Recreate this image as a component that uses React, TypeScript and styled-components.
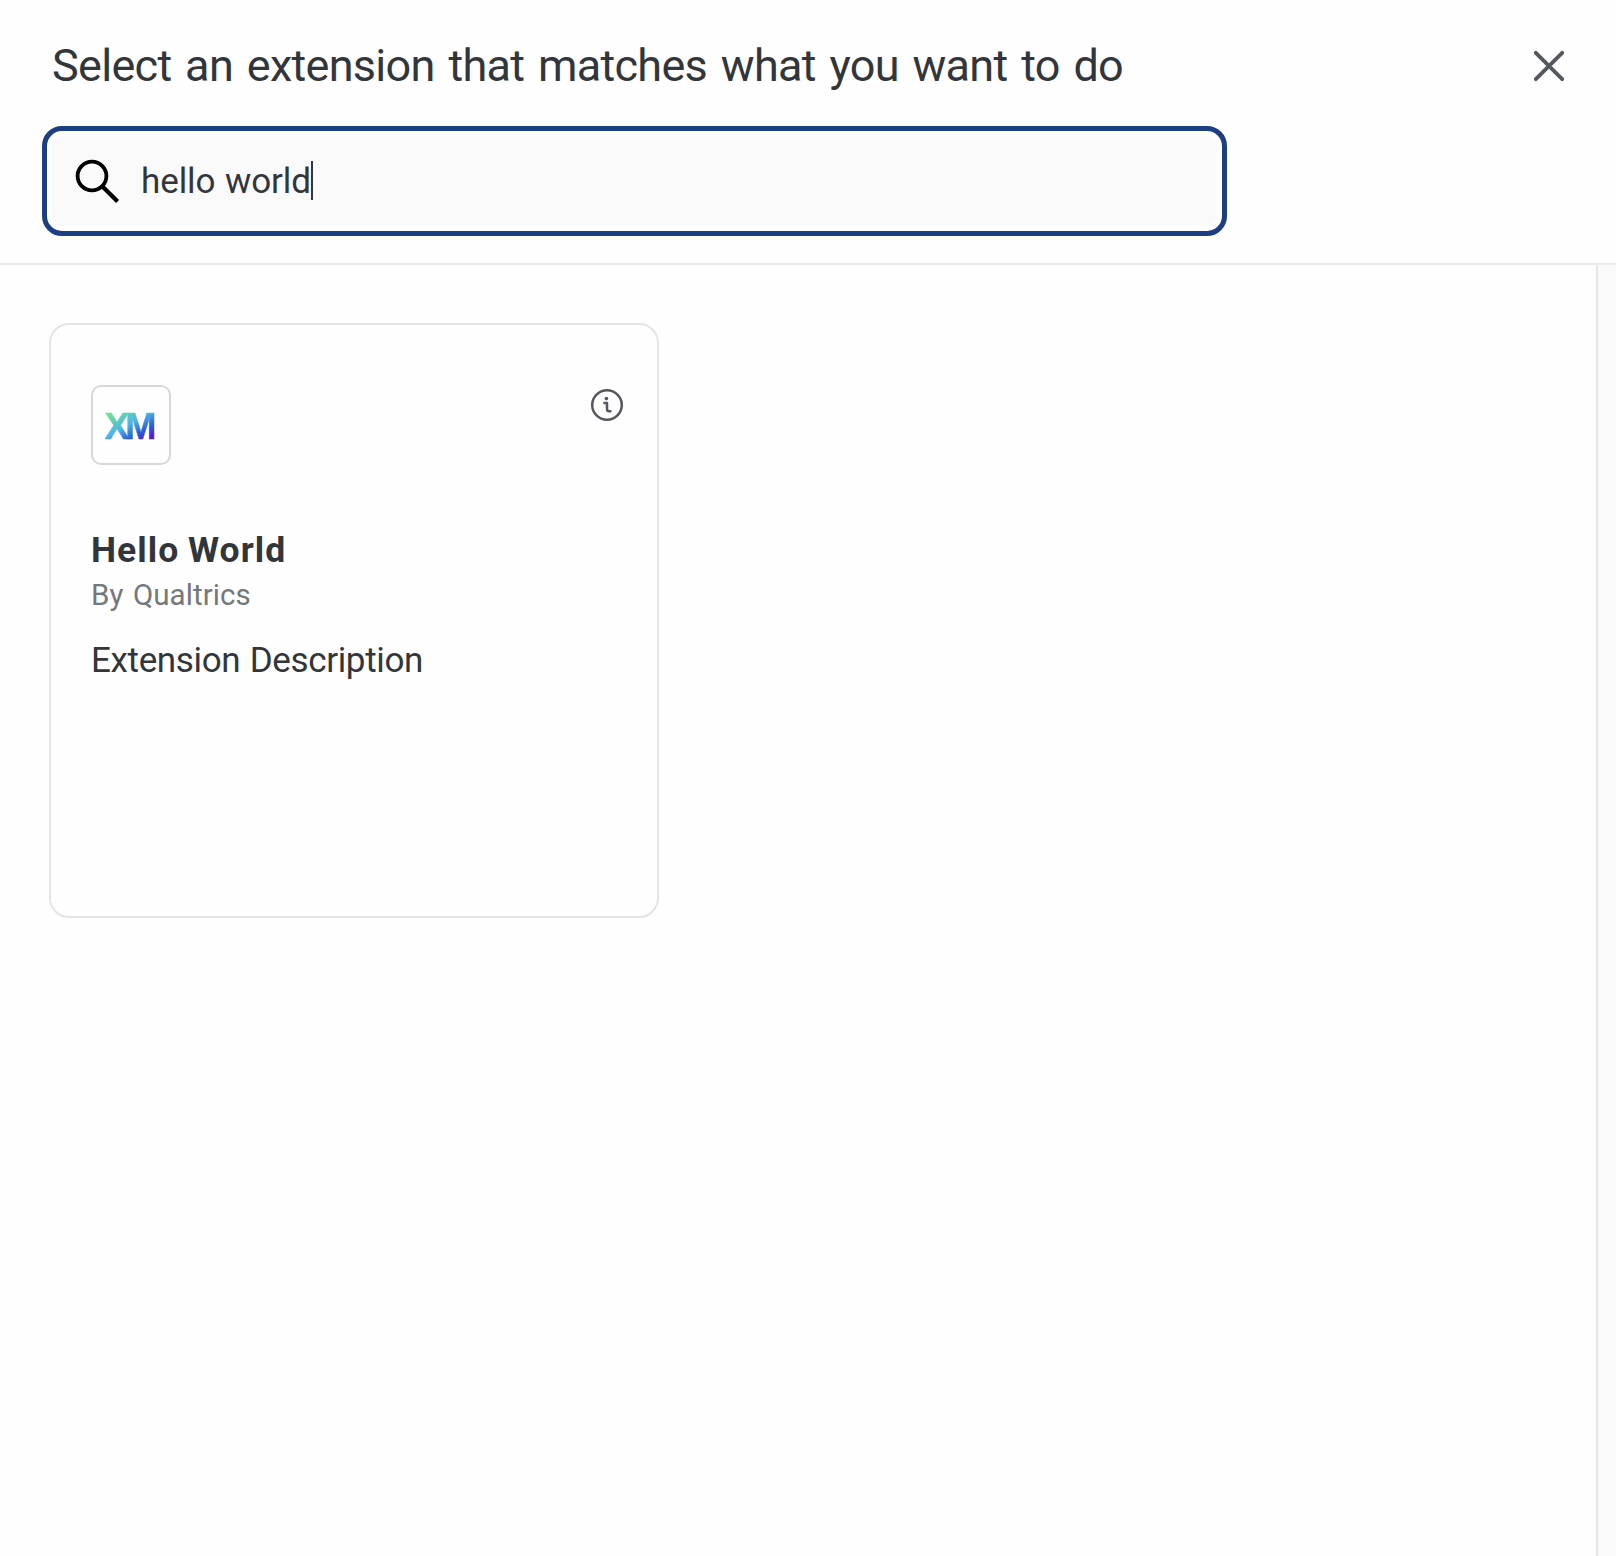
import React from "react";
import styled, { createGlobalStyle } from "styled-components";

const GlobalStyle = createGlobalStyle`
  * { box-sizing: border-box; }
  body { margin: 0; background: #fefefe; }
`;

const Dialog = styled.div`
  display: flex;
  flex-direction: column;
  width: 1616px;
  height: 1556px;
  background: #fefefe;
  color: #32363a;
  font-family: Roboto, "Liberation Sans", sans-serif;
  overflow: hidden;
`;

const Header = styled.header`
  height: 265px;
  flex: none;
  border-bottom: 2px solid #ececec;
  padding: 36px 46px 0 42px;
`;

const TitleRow = styled.div`
  display: flex;
  justify-content: space-between;
  align-items: center;
  height: 60px;
  margin-bottom: 30px;
  padding-left: 10px;
`;

const Title = styled.h1`
  margin: 0;
  font-size: 45px;
  font-weight: 400;
  line-height: 60px;
  letter-spacing: -0.7px;
  word-spacing: 3.2px;
  white-space: nowrap;
`;

const CloseButton = styled.button`
  display: flex;
  padding: 0;
  border: 0;
  background: none;
`;

const SearchField = styled.div`
  width: 1185px;
  height: 110px;
  padding: 5px;
  border: 5px solid #1c3f84;
  border-radius: 20px;
  background: #fff;
`;

const SearchInner = styled.div`
  display: flex;
  align-items: center;
  height: 90px;
  padding-left: 20px;
  border-radius: 10px;
  background: #fafafa;
`;

const Query = styled.span`
  margin-left: 19px;
  padding-top: 2px;
  font-size: 35px;
  line-height: 44px;
  letter-spacing: -0.1px;
  word-spacing: 1.1px;
  white-space: nowrap;
`;

const Caret = styled.span`
  width: 2px;
  height: 39px;
  margin-bottom: 1px;
  background: #32363a;
`;

const Body = styled.main`
  display: flex;
  flex: 1;
`;

const Results = styled.section`
  flex: 1;
  padding: 58px 0 0 49px;
`;

const ScrollTrack = styled.div`
  width: 20px;
  border-left: 2px solid #e6e6e6;
  background: #fafafa;
`;

const Card = styled.article`
  width: 610px;
  height: 595px;
  padding: 60px 33px 0 40px;
  border: 2px solid #e4e4e4;
  border-radius: 20px;
`;

const CardTop = styled.div`
  display: flex;
  justify-content: space-between;
  align-items: flex-start;
  height: 140px;
`;

const Logo = styled.div`
  display: flex;
  align-items: center;
  justify-content: center;
  width: 80px;
  height: 80px;
  border: 2.5px solid #d8d8d8;
  border-radius: 10px;
`;

const LogoText = styled.span`
  font: 700 37.5px/28px "Liberation Sans", Arial, sans-serif;
  letter-spacing: -4.4px;
  padding: 1px 5.5px 0 0;
  color: transparent;
  -webkit-text-stroke: 0.5px transparent;
  background: linear-gradient(150deg, #6be09a 12%, #4db4e8 46%, #2b62d5 70%, #5a1bd8 88%);
  background-clip: text;
  -webkit-background-clip: text;
`;

const InfoIcon = styled.svg`
  margin-top: 3px;
`;

const Name = styled.h2`
  margin: 0;
  font-size: 35.5px;
  font-weight: 700;
  line-height: 50px;
  letter-spacing: 1.03px;
  word-spacing: -1px;
`;

const Author = styled.p`
  margin: 0;
  font-size: 29.5px;
  line-height: 40px;
  letter-spacing: 0.08px;
  word-spacing: 2px;
  color: #75787b;
`;

const Description = styled.p`
  margin: 21px 0 0;
  font-size: 35px;
  line-height: 50px;
  letter-spacing: -0.35px;
  word-spacing: 1px;
`;

export default function App() {
  return (
    <Dialog>
      <GlobalStyle />
      <Header>
        <TitleRow>
          <Title>Select an extension that matches what you want to do</Title>
          <CloseButton aria-label="Close">
            <svg width="42" height="42" viewBox="0 0 42 42" fill="none" stroke="#54575b" strokeWidth="3.8" strokeLinecap="round">
              <path d="M7.8 7.8 34.2 34.2M34.2 7.8 7.8 34.2" />
            </svg>
          </CloseButton>
        </TitleRow>
        <SearchField>
          <SearchInner>
            <svg width="50" height="50" viewBox="0 0 50 50" fill="none" stroke="#000" strokeWidth="3.8">
              <circle cx="20" cy="20" r="14.4" />
              <path d="M30.5 30.5 45.6 45.6" strokeWidth="4.2" />
            </svg>
            <Query>hello world</Query>
            <Caret />
          </SearchInner>
        </SearchField>
      </Header>
      <Body>
        <Results>
          <Card>
            <CardTop>
              <Logo>
                <LogoText>XM</LogoText>
              </Logo>
              <InfoIcon width="34" height="34" viewBox="0 0 34 34" fill="none" stroke="#54575b" strokeWidth="2.5">
                <circle cx="17" cy="17" r="14.8" />
                <circle cx="16.4" cy="10.6" r="1.8" fill="#54575b" stroke="none" />
                <path d="M14.4 15H17V21Q17 23.3 19.2 23.3H20.4" strokeLinecap="round" strokeLinejoin="round" />
              </InfoIcon>
            </CardTop>
            <Name>Hello World</Name>
            <Author>By Qualtrics</Author>
            <Description>Extension Description</Description>
          </Card>
        </Results>
        <ScrollTrack />
      </Body>
    </Dialog>
  );
}
